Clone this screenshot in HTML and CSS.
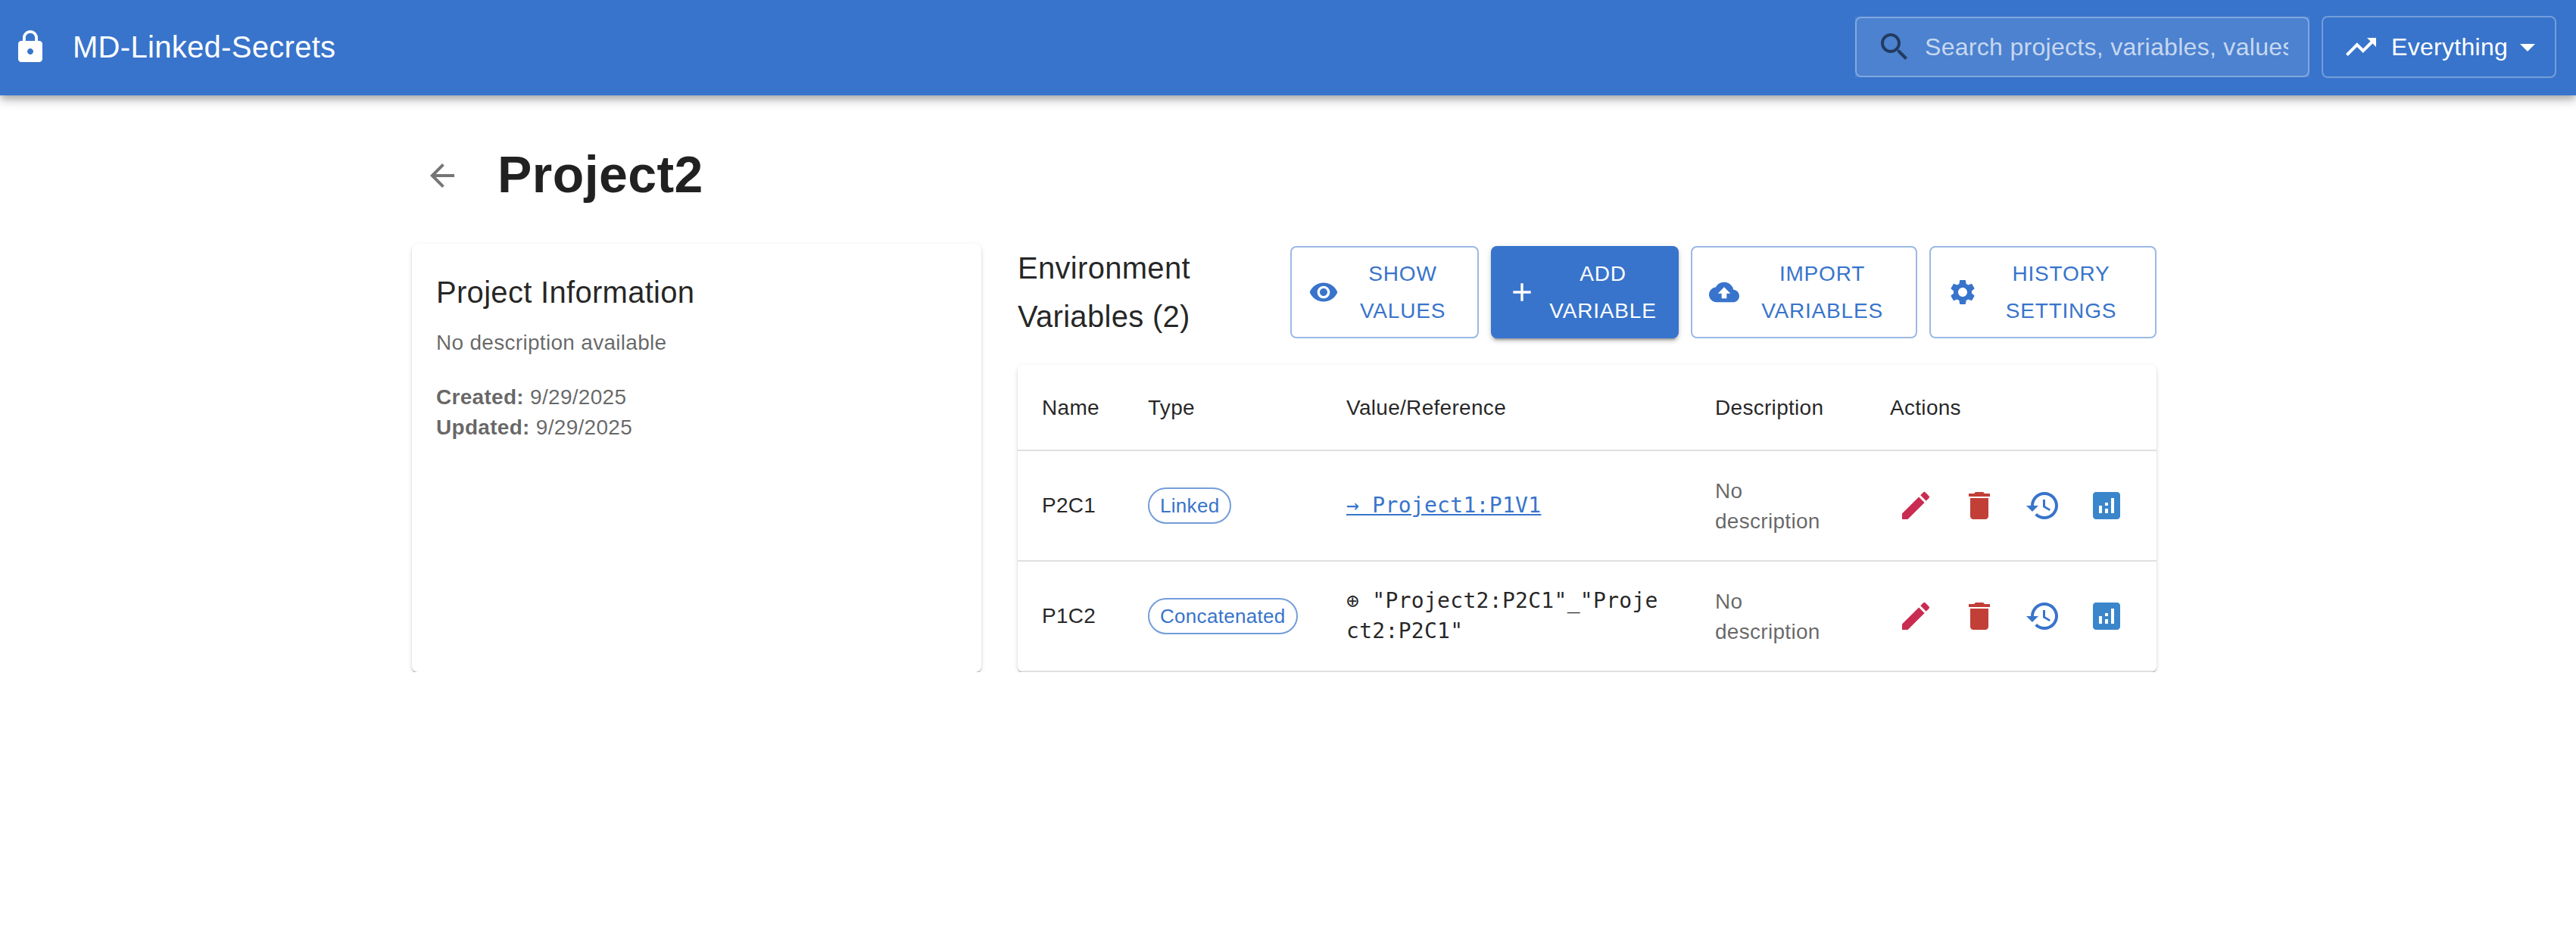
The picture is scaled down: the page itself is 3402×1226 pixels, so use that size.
FILE: index.html
```html
<!DOCTYPE html>
<html lang="en">
<head>
<meta charset="utf-8">
<title>MD-Linked-Secrets</title>
<link rel="stylesheet" href="styles.css">
</head>
<body>
<svg class="sprite" aria-hidden="true">
  <symbol id="edit" viewBox="0 0 24 24"><path d="M3 17.25V21h3.75L17.81 9.94l-3.75-3.75zM20.71 7.04c.39-.39.39-1.02 0-1.41l-2.34-2.34a.9959.9959 0 0 0-1.41 0l-1.83 1.83 3.75 3.75z"/></symbol>
  <symbol id="delete" viewBox="0 0 24 24"><path d="M6 19c0 1.1.9 2 2 2h8c1.1 0 2-.9 2-2V7H6zM19 4h-3.5l-1-1h-5l-1 1H5v2h14z"/></symbol>
  <symbol id="history" viewBox="0 0 24 24"><path d="M13 3c-4.97 0-9 4.03-9 9H1l3.89 3.89.07.14L9 12H6c0-3.87 3.13-7 7-7s7 3.13 7 7-3.13 7-7 7c-1.93 0-3.68-.79-4.94-2.06l-1.42 1.42C8.27 19.99 10.51 21 13 21c4.97 0 9-4.03 9-9s-4.03-9-9-9m-1 5v5l4.28 2.54.72-1.21-3.5-2.08V8z"/></symbol>
  <symbol id="analytics" viewBox="0 0 24 24"><path d="M19 3H5c-1.1 0-2 .9-2 2v14c0 1.1.9 2 2 2h14c1.1 0 2-.9 2-2V5c0-1.1-.9-2-2-2M9 17H7v-5h2zm4 0h-2v-3h2zm0-5h-2v-2h2zm4 5h-2V7h2z"/></symbol>
</svg>
<header class="appbar">
  <svg class="icon" viewBox="0 0 24 24"><path d="M18 8h-1V6c0-2.76-2.24-5-5-5S7 3.24 7 6v2H6c-1.1 0-2 .9-2 2v10c0 1.1.9 2 2 2h12c1.1 0 2-.9 2-2V10c0-1.1-.9-2-2-2m-6 9c-1.1 0-2-.9-2-2s.9-2 2-2 2 .9 2 2-.9 2-2 2m3.1-9H8.9V6c0-1.71 1.39-3.1 3.1-3.1s3.1 1.39 3.1 3.1z"/></svg>
  <div class="brand">MD-Linked-Secrets</div>
  <div class="search">
    <div class="search-field">
      <svg class="icon search-icon" viewBox="0 0 24 24"><path d="M15.5 14h-.79l-.28-.27C15.41 12.59 16 11.11 16 9.5 16 5.91 13.09 3 9.5 3S3 5.91 3 9.5 5.91 16 9.5 16c1.61 0 3.09-.59 4.23-1.57l.27.28v.79l5 4.99L20.49 19zm-6 0C7.01 14 5 11.99 5 9.5S7.01 5 9.5 5 14 7.01 14 9.5 11.99 14 9.5 14"/></svg>
      <input class="search-input" type="text" placeholder="Search projects, variables, values...">
    </div>
  </div>
  <div class="scope">
    <svg class="icon" viewBox="0 0 24 24"><path d="m16 6 2.29 2.29-4.88 4.88-4-4L2 16.59 3.41 18l6-6 4 4 6.3-6.29L22 12V6z"/></svg>
    <span class="scope-label">Everything</span>
    <svg class="icon" viewBox="0 0 24 24"><path d="m7 10 5 5 5-5z"/></svg>
  </div>
</header>
<main class="container">
  <div class="page-head">
    <a class="back"><svg class="icon" viewBox="0 0 24 24"><path d="M20 11H7.83l5.59-5.59L12 4l-8 8 8 8 1.41-1.41L7.83 13H20z"/></svg></a>
    <h1 class="page-title">Project2</h1>
  </div>
  <div class="columns">
    <section class="card info">
      <h2 class="h6 info-title">Project Information</h2>
      <p class="body2">No description available</p>
      <p class="body2 dates"><strong>Created:</strong> 9/29/2025<br><strong>Updated:</strong> 9/29/2025</p>
    </section>
    <section class="vars">
      <div class="vars-head">
        <h2 class="h6 vars-title">Environment Variables (2)</h2>
        <div class="buttons">
          <button class="btn"><svg class="btn-icon" viewBox="0 0 24 24"><path d="M12 4.5C7 4.5 2.73 7.61 1 12c1.73 4.39 6 7.5 11 7.5s9.27-3.11 11-7.5c-1.73-4.39-6-7.5-11-7.5M12 17c-2.76 0-5-2.24-5-5s2.24-5 5-5 5 2.24 5 5-2.24 5-5 5m0-8c-1.66 0-3 1.34-3 3s1.34 3 3 3 3-1.34 3-3-1.34-3-3-3"/></svg><span class="btn-label">SHOW<br>VALUES</span></button>
          <button class="btn primary"><svg class="btn-icon" viewBox="0 0 24 24"><path d="M19 13h-6v6h-2v-6H5v-2h6V5h2v6h6z"/></svg><span class="btn-label">ADD<br>VARIABLE</span></button>
          <button class="btn"><svg class="btn-icon" viewBox="0 0 24 24"><path d="M19.35 10.04C18.67 6.59 15.64 4 12 4 9.11 4 6.6 5.64 5.35 8.04 2.34 8.36 0 10.91 0 14c0 3.31 2.69 6 6 6h13c2.76 0 5-2.24 5-5 0-2.64-2.05-4.78-4.65-4.96M14 13v4h-4v-4H7l5-5 5 5z"/></svg><span class="btn-label">IMPORT<br>VARIABLES</span></button>
          <button class="btn"><svg class="btn-icon" viewBox="0 0 24 24"><path d="M19.14 12.94c.04-.3.06-.61.06-.94 0-.32-.02-.64-.07-.94l2.03-1.58c.18-.14.23-.41.12-.61l-1.92-3.32c-.12-.22-.37-.29-.59-.22l-2.39.96c-.5-.38-1.03-.7-1.62-.94l-.36-2.54c-.04-.24-.24-.41-.48-.41h-3.84c-.24 0-.43.17-.47.41l-.36 2.54c-.59.24-1.13.57-1.62.94l-2.39-.96c-.22-.08-.47 0-.59.22L2.74 8.87c-.12.21-.08.47.12.61l2.03 1.58c-.05.3-.09.63-.09.94s.02.64.07.94l-2.03 1.58c-.18.14-.23.41-.12.61l1.92 3.32c.12.22.37.29.59.22l2.39-.96c.5.38 1.03.7 1.62.94l.36 2.54c.05.24.24.41.48.41h3.84c.24 0 .44-.17.47-.41l.36-2.54c.59-.24 1.13-.56 1.62-.94l2.39.96c.22.08.47 0 .59-.22l1.92-3.32c.12-.22.07-.47-.12-.61zM12 15.6c-1.98 0-3.6-1.62-3.6-3.6s1.62-3.6 3.6-3.6 3.6 1.62 3.6 3.6-1.62 3.6-3.6 3.6"/></svg><span class="btn-label">HISTORY<br>SETTINGS</span></button>
        </div>
      </div>
      <div class="card">
        <table class="table">
          <colgroup><col class="c-name"><col class="c-type"><col class="c-value"><col class="c-desc"><col class="c-act"></colgroup>
          <thead><tr><th>Name</th><th>Type</th><th>Value/Reference</th><th>Description</th><th>Actions</th></tr></thead>
          <tbody>
            <tr>
              <td>P2C1</td>
              <td><span class="chip">Linked</span></td>
              <td class="mono"><a class="link">→ Project1:P1V1</a></td>
              <td class="muted">No description</td>
              <td><div class="actions">
                <svg class="icon edit"><use href="#edit"/></svg>
                <svg class="icon delete"><use href="#delete"/></svg>
                <svg class="icon history"><use href="#history"/></svg>
                <svg class="icon analytics"><use href="#analytics"/></svg>
              </div></td>
            </tr>
            <tr>
              <td>P1C2</td>
              <td><span class="chip">Concatenated</span></td>
              <td class="mono">⊕ "Project2:P2C1"_"Project2:P2C1"</td>
              <td class="muted">No description</td>
              <td><div class="actions">
                <svg class="icon edit"><use href="#edit"/></svg>
                <svg class="icon delete"><use href="#delete"/></svg>
                <svg class="icon history"><use href="#history"/></svg>
                <svg class="icon analytics"><use href="#analytics"/></svg>
              </div></td>
            </tr>
          </tbody>
        </table>
      </div>
    </section>
  </div>
</main>
</body>
</html>
```
FILE: styles.css
```css
:root {
  --primary: #3874cb;
  --text: rgba(0, 0, 0, .87);
  --muted: rgba(0, 0, 0, .6);
}
* { box-sizing: border-box; }
body {
  margin: 0;
  background: #fff;
  color: var(--text);
  font-family: Helvetica, "Liberation Sans", Arial, sans-serif;
}
h1, h2, p { margin: 0; font-weight: 400; }
.sprite { display: none; }
.icon { width: 48px; height: 48px; fill: currentColor; flex: none; display: block; }

.appbar {
  height: 126px;
  padding: 0 26px 2px 16px;
  display: flex;
  align-items: center;
  background: var(--primary);
  color: #fff;
  box-shadow: 0 4px 8px -2px rgba(0, 0, 0, .2), 0 8px 10px 0 rgba(0, 0, 0, .14), 0 2px 20px 0 rgba(0, 0, 0, .12);
}
.brand {
  flex: 1;
  margin-left: 32px;
  font-size: 40px;
  line-height: 64px;
  letter-spacing: .0075em;
}
.search { width: 600px; height: 80px; background: rgba(255, 255, 255, .1); margin-right: 16px; }
.search-field {
  height: 80px;
  padding: 0 26px;
  display: flex;
  align-items: center;
  gap: 16px;
  border: 2px solid rgba(255, 255, 255, .3);
  border-radius: 8px;
}
.search-icon { color: rgba(0, 0, 0, .54); }
.search-input {
  flex: 1;
  min-width: 0;
  height: 46px;
  padding: 0;
  border: 0;
  background: none;
  color: #fff;
  font: 32px/46px Helvetica, "Liberation Sans", Arial, sans-serif;
  letter-spacing: .00938em;
}
.search-input::placeholder { color: rgba(255, 255, 255, .7); opacity: 1; }
.scope {
  width: 310px;
  height: 82px;
  padding: 0 12px 0 26px;
  display: flex;
  align-items: center;
  border: 2px solid rgba(255, 255, 255, .3);
  border-radius: 8px;
}
.scope-label { flex: 1; margin-left: 16px; font-size: 32px; letter-spacing: .00938em; }

.container { width: 2304px; margin: 64px 0 0 544px; }
.page-head { display: flex; align-items: center; height: 84px; margin-bottom: 48px; }
.back { padding: 16px; margin-right: 33px; color: rgba(0, 0, 0, .54); }
.page-title { padding-bottom: 4px; font-size: 68px; font-weight: 700; line-height: 84px; letter-spacing: .0065em; }
.columns { display: grid; grid-template-columns: 1fr 2fr; gap: 48px; }
.card {
  background: #fff;
  border-radius: 8px;
  overflow: hidden;
  box-shadow: 0 4px 2px -2px rgba(0, 0, 0, .2), 0 2px 2px 0 rgba(0, 0, 0, .14), 0 2px 6px 0 rgba(0, 0, 0, .12);
}
.info { padding: 32px; }
.h6 { font-size: 40px; line-height: 64px; letter-spacing: .0075em; }
.info-title { margin-bottom: 15px; }
.body2 { font-size: 28px; line-height: 40px; letter-spacing: .01071em; color: var(--muted); }
.dates { margin-top: 32px; }

.vars-head { display: flex; justify-content: space-between; align-items: center; margin-bottom: 32px; }
.vars-title { width: 260px; }
.buttons { display: grid; grid-template-columns: 249px 248px 299px 300px; gap: 16px; }
.btn {
  height: 122px;
  padding: 0 30px 0 22px;
  display: flex;
  align-items: center;
  border: 2px solid rgba(56, 116, 203, .5);
  border-radius: 8px;
  background: none;
  color: var(--primary);
  font: 28px/49px Helvetica, "Liberation Sans", Arial, sans-serif;
  letter-spacing: .02857em;
}
.primary {
  padding: 0 29px 0 21px;
  border: 0;
  background: var(--primary);
  color: #fff;
  box-shadow: 0 6px 2px -4px rgba(0, 0, 0, .2), 0 4px 4px 0 rgba(0, 0, 0, .14), 0 2px 10px 0 rgba(0, 0, 0, .12);
}
.btn-icon { width: 40px; height: 40px; margin-right: 16px; fill: currentColor; flex: none; }
.btn-label { flex: 1; text-align: center; }

.table { width: 1504px; table-layout: fixed; border-collapse: separate; border-spacing: 0; }
.c-name { width: 140px; }
.c-type { width: 262px; }
.c-value { width: 487px; }
.c-desc { width: 231px; }
.c-act { width: 384px; }
th, td {
  padding: 32px;
  border-bottom: 2px solid #e0e0e0;
  text-align: left;
  vertical-align: middle;
  font-size: 28px;
  font-weight: 400;
  line-height: 40px;
  letter-spacing: .01071em;
}
th { height: 114px; padding: 33px 32px 31px; line-height: 48px; white-space: nowrap; }
td { height: 146px; }
.muted { padding: 33px 32px 31px; color: var(--muted); }
.mono { font-family: Menlo, "DejaVu Sans Mono", monospace; word-break: break-all; }
.link { color: var(--primary); text-decoration: underline; }
.chip {
  display: inline-block;
  height: 48px;
  padding: 0 14px;
  border: 2px solid rgba(56, 116, 203, .7);
  border-radius: 24px;
  color: var(--primary);
  font-size: 26px;
  line-height: 44px;
  letter-spacing: .3px;
  vertical-align: middle;
  white-space: nowrap;
}
.actions { display: flex; gap: 36px; padding-left: 10px; }
.edit { color: #c92c50; }
.delete { color: #c23f38; }
.history { color: var(--primary); }
.analytics { color: #3b86cb; }
```
